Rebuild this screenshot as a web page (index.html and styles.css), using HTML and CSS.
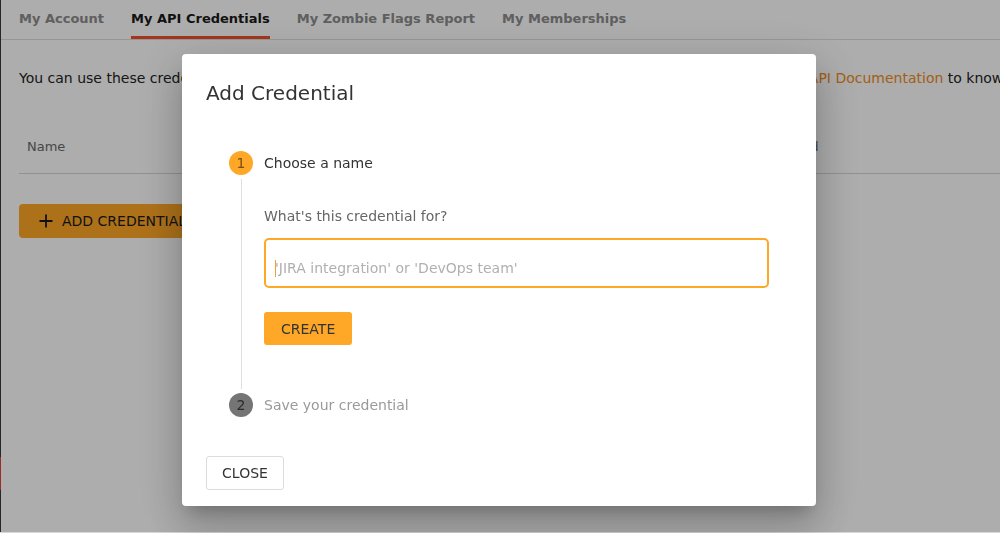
FILE: index.html
```html
<!DOCTYPE html>
<html>
<head>
<meta charset="utf-8">
<link rel="stylesheet" href="styles.css">
</head>
<body>
<div class="app">
  <div class="edge"><span class="edge-mark"></span></div>
  <main class="page">
    <nav class="tabs">
      <a class="tab">My Account</a>
      <a class="tab active">My API Credentials</a>
      <a class="tab">My Zombie Flags Report</a>
      <a class="tab">My Memberships</a>
    </nav>
    <section class="content">
      <p class="intro">You can use these credentials to authenticate your own requests towards the Zombie Flags public API. Read the <a class="link">API Documentation</a> to know more about it.</p>
      <div class="table-head">
        <span class="col col-name">Name</span>
        <span class="col col-key">Key</span>
        <span class="col col-created">Created</span>
      </div>
      <button class="add-btn"><svg class="plus" width="14" height="14" viewBox="0 0 14 14"><path d="M7 0.5V13.5M0.5 7H13.5" stroke="#1a1a1a" stroke-width="1.8" fill="none"/></svg>ADD CREDENTIAL</button>
    </section>
  </main>
</div>

<div class="overlay"></div>

<div class="modal">
  <h2 class="modal-title">Add Credential</h2>
  <div class="stepper">
    <div class="step-header">
      <span class="step-num active">1</span>
      <span class="step-label">Choose a name</span>
    </div>
    <div class="step-body">
      <div class="field-label">What's this credential for?</div>
      <div class="input"><span class="caret"></span><span class="placeholder">'JIRA integration' or 'DevOps team'</span></div>
      <button class="create-btn">CREATE</button>
    </div>
    <div class="step-header">
      <span class="step-num inactive">2</span>
      <span class="step-label muted">Save your credential</span>
    </div>
  </div>
  <div class="actions">
    <button class="close-btn">CLOSE</button>
  </div>
</div>
</body>
</html>
```
FILE: styles.css
```css
* { box-sizing: border-box; }
html, body { margin: 0; height: 100%; }
body {
  font-family: "DejaVu Sans", sans-serif;
  color: #333;
  background: #d8d8d8;
  overflow: hidden;
}
.app { display: flex; height: 532px; background: #fff; }
.edge {
  width: 1px;
  background: #3a3a3a;
  display: flex;
  flex-direction: column;
  padding-top: 457px;
}
.edge-mark { height: 33px; background: #e0453a; }
.page { flex: 1; min-width: 0; }
.tabs {
  display: flex;
  gap: 27px;
  padding: 0 18px;
  height: 40px;
  border-bottom: 1px solid #dedede;
  white-space: nowrap;
}
.tab {
  font-size: 13px;
  font-weight: bold;
  color: #8c8c8c;
  line-height: 37px;
  border-bottom: 3px solid transparent;
}
.tab.active { color: #1a1a1a; border-bottom-color: #f0502a; }
.content { padding: 0 0 0 18px; }
.intro {
  margin: 28px 0 0;
  font-size: 14px;
  line-height: 20px;
  white-space: nowrap;
  color: #222;
  overflow: hidden;
}
.link { color: #f08c1e; }
.table-head {
  margin-top: 31px;
  height: 55px;
  display: grid;
  grid-template-columns: 300px 440px 1fr;
  align-items: center;
  padding: 0 8px;
  border-bottom: 1px solid #d6d6d6;
  font-size: 13px;
  color: #6a6a6a;
}
.add-btn {
  margin-top: 30px;
  height: 34px;
  padding: 0 20px;
  background: #ffa726;
  border: none;
  border-radius: 4px;
  font-family: inherit;
  font-size: 14px;
  color: #1a1a1a;
  display: flex;
  align-items: center;
  gap: 9px;
}
.overlay {
  position: fixed;
  left: 0; top: 0; right: 0;
  height: 532px;
  background: rgba(0, 0, 0, 0.32);
}
.modal {
  position: fixed;
  left: 182px;
  top: 54px;
  width: 634px;
  height: 452px;
  background: #fff;
  border-radius: 4px;
  padding: 24px;
  box-shadow: 0 11px 15px -7px rgba(0,0,0,.2), 0 24px 38px 3px rgba(0,0,0,.14), 0 9px 46px 8px rgba(0,0,0,.12);
  display: flex;
  flex-direction: column;
}
.modal-title {
  margin: 0;
  font-size: 20px;
  font-weight: normal;
  line-height: 30px;
  color: #333;
}
.stepper { margin-top: 43px; padding-left: 23px; }
.step-header { display: flex; align-items: center; gap: 11px; height: 24px; }
.step-num {
  width: 24px; height: 24px;
  border-radius: 50%;
  display: flex; align-items: center; justify-content: center;
  font-size: 14px;
}
.step-num.active { background: #ffa726; color: #7a4e0c; }
.step-num.inactive { background: #757575; color: #2a2a2a; }
.step-label { font-size: 14px; color: #333; }
.step-label.muted { color: #9a9a9a; }
.step-body {
  margin: 4px 0 4px 12px;
  border-left: 1px solid #e0e0e0;
  padding: 27px 0 44px 22px;
}
.field-label { font-size: 14px; line-height: 20px; color: #666; }
.input {
  margin-top: 12px;
  width: 505px;
  height: 50px;
  border: 2px solid #ffa726;
  border-radius: 5px;
  display: flex;
  align-items: center;
  padding: 10px 0 0 9px;
  font-size: 14px;
}
.caret { width: 1px; height: 17px; background: #f0a030; margin-right: -1px; }
.placeholder { color: #b0b0b0; }
.create-btn {
  margin-top: 24px;
  height: 33px;
  padding: 0 17px;
  background: #ffa726;
  border: none;
  border-radius: 3px;
  font-family: inherit;
  font-size: 14px;
  color: #333;
}
.actions { margin-top: 39px; }
.close-btn {
  height: 34px;
  width: 78px;
  background: #fff;
  border: 1px solid #dcdcdc;
  border-radius: 3px;
  font-family: inherit;
  font-size: 14px;
  color: #333;
}
```
